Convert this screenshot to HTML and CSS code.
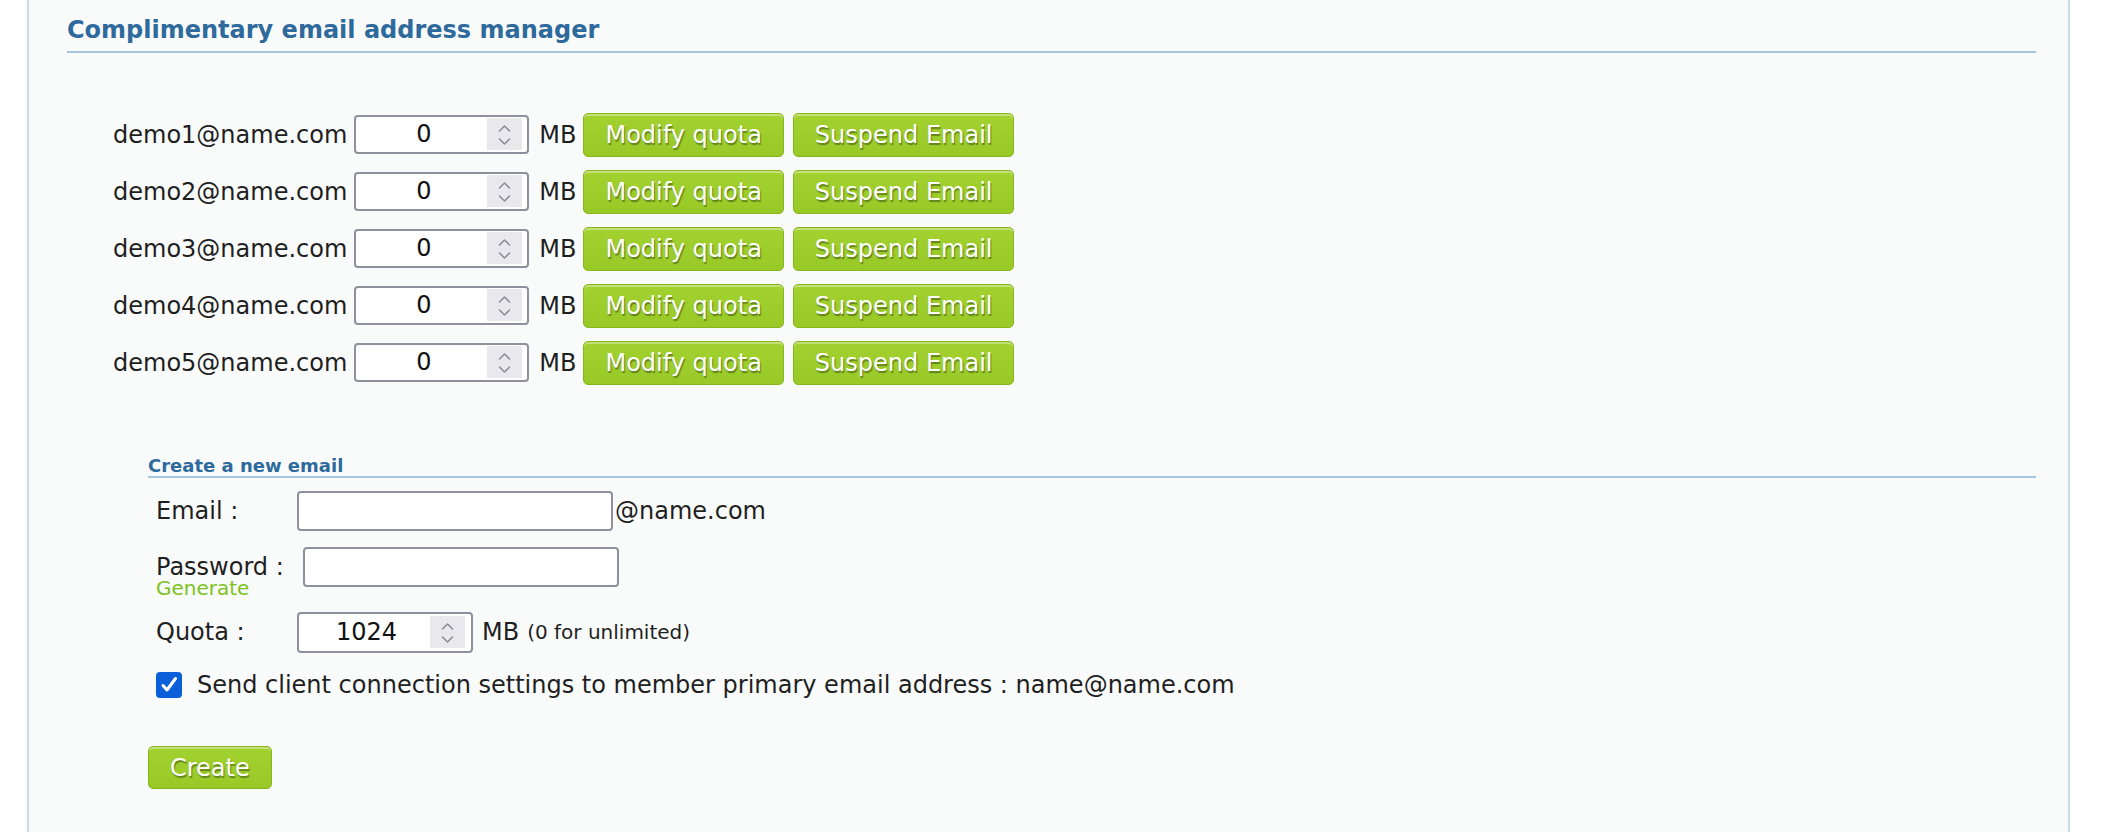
FILE: index.html
```html
<!DOCTYPE html>
<html lang="en">
<head>
<meta charset="utf-8">
<title>Complimentary email address manager</title>
<link rel="stylesheet" href="styles.css">
</head>
<body>
<div class="panel">
  <h2 class="title">Complimentary email address manager</h2>

  <div class="accounts">
    <div class="acct-row">
      <span class="acct">demo1@name.com</span>
      <span class="num"><input class="num-in" type="text" value="0"><span class="spin"><svg width="35" height="32" viewBox="0 0 35 32"><polyline points="12.5,13 17.5,8 22.5,13" /><polyline points="12.5,21 17.5,26 22.5,21" /></svg></span></span>
      <span class="unit">MB</span>
      <button class="btn">Modify quota</button>
      <button class="btn">Suspend Email</button>
    </div>
    <div class="acct-row">
      <span class="acct">demo2@name.com</span>
      <span class="num"><input class="num-in" type="text" value="0"><span class="spin"><svg width="35" height="32" viewBox="0 0 35 32"><polyline points="12.5,13 17.5,8 22.5,13" /><polyline points="12.5,21 17.5,26 22.5,21" /></svg></span></span>
      <span class="unit">MB</span>
      <button class="btn">Modify quota</button>
      <button class="btn">Suspend Email</button>
    </div>
    <div class="acct-row">
      <span class="acct">demo3@name.com</span>
      <span class="num"><input class="num-in" type="text" value="0"><span class="spin"><svg width="35" height="32" viewBox="0 0 35 32"><polyline points="12.5,13 17.5,8 22.5,13" /><polyline points="12.5,21 17.5,26 22.5,21" /></svg></span></span>
      <span class="unit">MB</span>
      <button class="btn">Modify quota</button>
      <button class="btn">Suspend Email</button>
    </div>
    <div class="acct-row">
      <span class="acct">demo4@name.com</span>
      <span class="num"><input class="num-in" type="text" value="0"><span class="spin"><svg width="35" height="32" viewBox="0 0 35 32"><polyline points="12.5,13 17.5,8 22.5,13" /><polyline points="12.5,21 17.5,26 22.5,21" /></svg></span></span>
      <span class="unit">MB</span>
      <button class="btn">Modify quota</button>
      <button class="btn">Suspend Email</button>
    </div>
    <div class="acct-row">
      <span class="acct">demo5@name.com</span>
      <span class="num"><input class="num-in" type="text" value="0"><span class="spin"><svg width="35" height="32" viewBox="0 0 35 32"><polyline points="12.5,13 17.5,8 22.5,13" /><polyline points="12.5,21 17.5,26 22.5,21" /></svg></span></span>
      <span class="unit">MB</span>
      <button class="btn">Modify quota</button>
      <button class="btn">Suspend Email</button>
    </div>
  </div>

  <div class="create">
    <h3 class="sub">Create a new email</h3>

    <div class="frow">
      <label class="flbl">Email :</label>
      <input class="txt" type="text">
      <span class="suffix">@name.com</span>
    </div>

    <div class="frow">
      <div class="flbl pw">
        <span class="pw-text">Password :</span>
        <a class="gen">Generate</a>
      </div>
      <input class="txt" type="password">
    </div>

    <div class="frow quota-row">
      <label class="flbl">Quota :</label>
      <span class="num quota"><input class="num-in" type="text" value="1024"><span class="spin"><svg width="35" height="32" viewBox="0 0 35 32"><polyline points="12.5,13 17.5,8 22.5,13" /><polyline points="12.5,21 17.5,26 22.5,21" /></svg></span></span>
      <span class="unit">MB</span>
      <span class="hint">(0 for unlimited)</span>
    </div>

    <div class="crow">
      <span class="check"><svg width="26" height="26" viewBox="0 0 26 26"><path d="M7 13.5 L11 18 L19.5 6.5" /></svg></span>
      <span class="ctext">Send client connection settings to member primary email address : name@name.com</span>
    </div>

    <button class="btn create-btn">Create</button>
  </div>
</div>
</body>
</html>
```

FILE: styles.css
```css
html, body {
  margin: 0;
  padding: 0;
  background: #ffffff;
}

body {
  font-family: "DejaVu Sans", Verdana, sans-serif;
  font-size: 24px;
  color: #1f1f1f;
}

.panel {
  box-sizing: border-box;
  margin-left: 27px;
  width: 2043px;
  min-height: 832px;
  background: #f9fbfb;
  border-left: 2px solid #c6dbec;
  border-right: 2px solid #c6dbec;
  padding: 0 32px 0 38px;
}

.title {
  margin: 0;
  padding: 16px 0 7px;
  font-size: 24px;
  line-height: 28px;
  font-weight: bold;
  color: #2e6a9c;
  border-bottom: 2px solid #a6c6e0;
}

.accounts {
  margin-top: 59px;
  margin-left: 46px;
}

.acct-row {
  display: flex;
  align-items: center;
  height: 45px;
  margin-bottom: 12px;
}

.acct-row:last-child {
  margin-bottom: 0;
}

.acct {
  margin-right: 7px;
  white-space: nowrap;
}

.num {
  box-sizing: border-box;
  display: inline-flex;
  align-items: flex-start;
  width: 175px;
  height: 39px;
  padding: 1px 5px 2px 0;
  background: #ffffff;
  border: 2px solid #8f8f9d;
  border-radius: 4px;
}

.num.quota {
  width: 176px;
  height: 41px;
  padding: 2px 6px 3px 0;
}

.num-in {
  flex: 1;
  min-width: 0;
  height: 32px;
  border: none;
  outline: none;
  background: transparent;
  padding: 0 0 0 4px;
  margin: 0;
  font-family: "DejaVu Sans", Verdana, sans-serif;
  font-size: 24px;
  color: #111111;
  text-align: center;
}

.spin {
  display: block;
  width: 35px;
  height: 32px;
  background: #e9e9ed;
}

.spin svg {
  display: block;
}

.spin polyline {
  fill: none;
  stroke: #8d8d96;
  stroke-width: 1.6;
  stroke-linecap: round;
  stroke-linejoin: round;
}

.unit {
  margin-left: 10px;
  margin-right: 7px;
}

.btn {
  box-sizing: border-box;
  height: 44px;
  margin: 0 9px 0 0;
  padding: 0 21px;
  font-family: "DejaVu Sans", Verdana, sans-serif;
  font-size: 24px;
  line-height: 28px;
  color: #ffffff;
  text-shadow: 1px 1.5px 1px rgba(60, 80, 20, 0.6);
  background: linear-gradient(#a3d230, #98c926);
  border: 1px solid #86b71c;
  border-radius: 5px;
  box-shadow: inset 0 2px 0 rgba(255, 255, 255, 0.35);
  cursor: pointer;
}

.create {
  margin-top: 70px;
  margin-left: 81px;
}

.sub {
  margin: 0;
  font-size: 18px;
  line-height: 21px;
  font-weight: bold;
  color: #2e6a9c;
  border-bottom: 2px solid #a6c6e0;
}

.frow {
  display: flex;
  align-items: flex-start;
  margin-left: 8px;
  margin-top: 16px;
  line-height: 40px;
}

.sub + .frow {
  margin-top: 13px;
}

.frow.quota-row {
  margin-top: 17px;
}

.flbl {
  display: block;
  min-width: 141px;
  white-space: nowrap;
}

.flbl.pw {
  width: 147px;
  min-width: 0;
  display: flex;
  flex-direction: column;
}

.pw-text {
  display: block;
  margin-top: 6px;
  line-height: 28px;
}

.gen {
  display: block;
  font-size: 20px;
  line-height: 14px;
  color: #7dc21c;
  cursor: pointer;
}

.txt {
  box-sizing: border-box;
  width: 316px;
  height: 40px;
  margin: 0;
  padding: 0 6px;
  background: #ffffff;
  border: 2px solid #8f8f9d;
  border-radius: 4px;
  font-family: "DejaVu Sans", Verdana, sans-serif;
  font-size: 24px;
}

.suffix {
  margin-left: 2px;
}

.hint {
  font-size: 20px;
}

.frow .unit {
  margin-left: 9px;
  margin-right: 8px;
}

.crow {
  display: flex;
  align-items: center;
  height: 28px;
  margin-left: 8px;
  margin-top: 18px;
}

.check {
  display: block;
  width: 26px;
  height: 26px;
  border-radius: 4px;
  background: #0b5fd8;
  margin-right: 15px;
}

.check svg {
  display: block;
}

.check path {
  fill: none;
  stroke: #ffffff;
  stroke-width: 3;
  stroke-linecap: round;
  stroke-linejoin: round;
}

.create-btn {
  display: block;
  margin-top: 47px;
  height: 43px;
}
```
